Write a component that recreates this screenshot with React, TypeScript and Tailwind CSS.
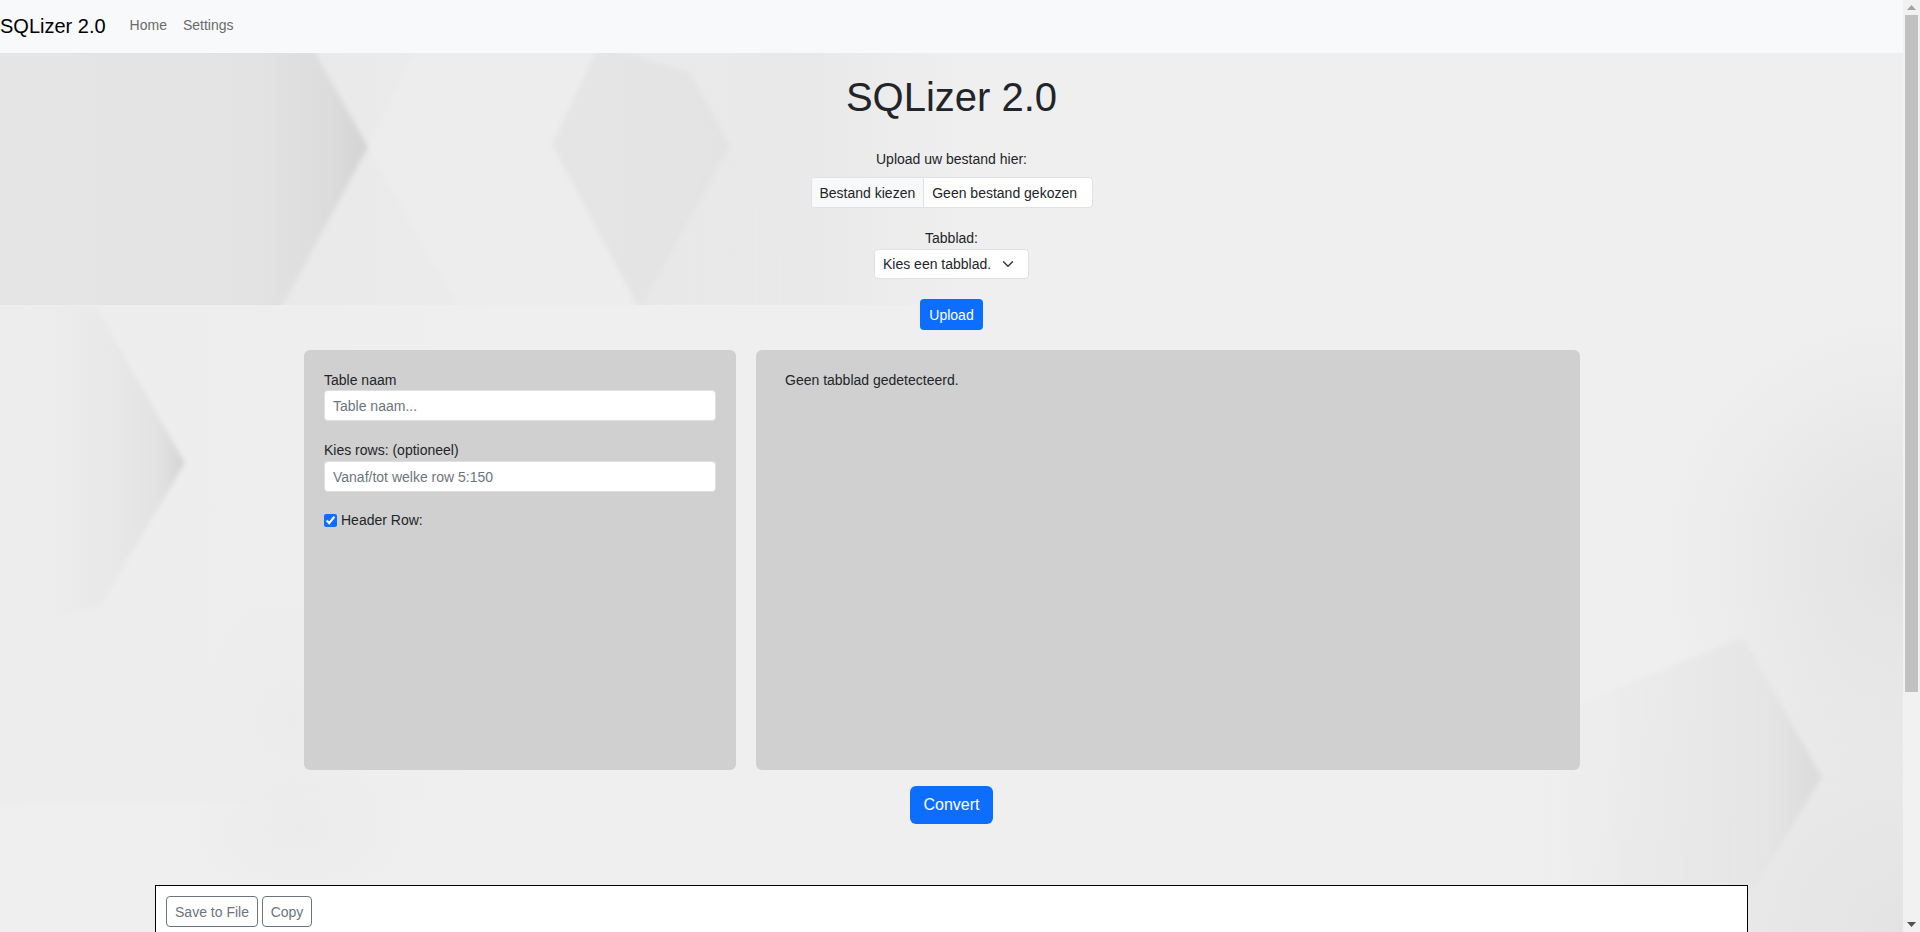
import { ChevronDown } from 'lucide-react'

const FONT = "font-['Liberation_Sans',Arial,sans-serif]"

// achtergrond: grijze zeshoeken, alleen decoratie
function Achtergrond() {
  return (
    <svg className="absolute inset-0 h-full w-full" viewBox="0 0 1903 932" preserveAspectRatio="none" aria-hidden="true">
      <defs>
        <linearGradient id="band" x1="0" x2="1" y1="0" y2="0">
          <stop offset="0" stopColor="#e6e6e6" />
          <stop offset="0.45" stopColor="#ebebeb" />
          <stop offset="0.85" stopColor="#e9e9e9" />
          <stop offset="1" stopColor="#efefef" />
        </linearGradient>
        <linearGradient id="hexA" x1="0" x2="1" y1="0" y2="0">
          <stop offset="0" stopColor="#e5e5e5" />
          <stop offset="0.7" stopColor="#e3e3e3" />
          <stop offset="0.9" stopColor="#dcdcdc" />
          <stop offset="1" stopColor="#d3d3d3" />
        </linearGradient>
        <linearGradient id="hexB" x1="0" x2="1" y1="0" y2="0">
          <stop offset="0" stopColor="#e5e5e5" />
          <stop offset="1" stopColor="#e3e3e3" />
        </linearGradient>
        <linearGradient id="rechts" x1="0" x2="1" y1="0" y2="0">
          <stop offset="0" stopColor="#e8e8e8" />
          <stop offset="1" stopColor="#e8e8e8" stopOpacity="0" />
        </linearGradient>
        <linearGradient id="hexC" x1="0" x2="1" y1="0" y2="0">
          <stop offset="0" stopColor="#e8e8e8" stopOpacity="0" />
          <stop offset="0.5" stopColor="#e8e8e8" />
          <stop offset="0.82" stopColor="#e2e2e2" />
          <stop offset="1" stopColor="#d4d4d4" />
        </linearGradient>
        <linearGradient id="hexD" x1="0" x2="1" y1="0" y2="0">
          <stop offset="0" stopColor="#e8e8e8" stopOpacity="0" />
          <stop offset="0.55" stopColor="#e8e8e8" stopOpacity="0.9" />
          <stop offset="0.8" stopColor="#e5e5e5" />
          <stop offset="1" stopColor="#dbdbdb" />
        </linearGradient>
        <linearGradient id="onderBand" x1="0" x2="1" y1="0" y2="0">
          <stop offset="0" stopColor="#ededed" />
          <stop offset="1" stopColor="#ededed" stopOpacity="0" />
        </linearGradient>
        <radialGradient id="hoekMidden">
          <stop offset="0" stopColor="#e2e2e2" />
          <stop offset="1" stopColor="#e2e2e2" stopOpacity="0" />
        </radialGradient>
        <radialGradient id="hoekOnder">
          <stop offset="0" stopColor="#e3e3e3" />
          <stop offset="1" stopColor="#e3e3e3" stopOpacity="0" />
        </radialGradient>
        <radialGradient id="vlek">
          <stop offset="0" stopColor="#ebebeb" />
          <stop offset="1" stopColor="#ebebeb" stopOpacity="0" />
        </radialGradient>
        <filter id="zacht" x="-10%" y="-10%" width="120%" height="120%">
          <feGaussianBlur stdDeviation="2.5" />
        </filter>
        <clipPath id="bandClip">
          <rect y="53" width="1903" height="252" />
        </clipPath>
      </defs>

      <rect width="1903" height="932" fill="#efefef" />
      <rect y="305" width="500" height="500" fill="url(#onderBand)" />
      <circle cx="1903" cy="560" r="240" fill="url(#hoekMidden)" />
      <circle cx="1903" cy="932" r="340" fill="url(#hoekOnder)" />
      <ellipse cx="290" cy="720" rx="90" ry="130" fill="url(#vlek)" />
      <ellipse cx="300" cy="830" rx="110" ry="70" fill="url(#vlek)" />

      <rect y="53" width="960" height="252" fill="url(#band)" />
      <g clipPath="url(#bandClip)">
        <g filter="url(#zacht)">
          <polygon points="-10,40 308,40 368,147 280,310 -10,310" fill="url(#hexA)" />
          <polygon points="420,40 600,40 552,145 640,310 460,310 368,147" fill="#ededed" />
          <polygon points="600,45 690,73 730,145 640,310 552,145" fill="url(#hexB)" />
          <polygon points="730,145 820,310 640,310" fill="url(#rechts)" />
        </g>
      </g>

      <g filter="url(#zacht)">
        <polygon points="40,305 95,305 185,463 100,606 40,620" fill="url(#hexC)" />
        <polygon points="1540,720 1743,637 1822,777 1750,895 1540,900" fill="url(#hexD)" />
      </g>
    </svg>
  )
}

function Scrollbalk() {
  return (
    <div className="relative flex w-[17px] shrink-0 flex-col items-center bg-[#f1f1f1]">
      <div className="flex h-[15px] items-center justify-center">
        <svg width="9" height="5" viewBox="0 0 9 5"><polygon points="4.5,0 9,5 0,5" fill="#a3a3a3" /></svg>
      </div>
      <div className="h-[677px] w-[13px] bg-[#c1c1c1]" />
      <div className="mt-auto flex h-[15px] items-center justify-center">
        <svg width="9" height="5" viewBox="0 0 9 5"><polygon points="0,0 9,0 4.5,5" fill="#505050" /></svg>
      </div>
    </div>
  )
}

export default function App() {
  const veld = 'h-[31px] w-full rounded-[4px] border border-[#dee2e6] bg-white px-2 text-sm text-[#212529] placeholder:text-[#6c757d] outline-none'

  return (
    <div className={`${FONT} flex h-[932px] overflow-hidden text-sm text-[#212529]`}>
      <div className="relative min-w-0 flex-1">
        <Achtergrond />

        <div className="relative">
          <nav className="flex h-[53px] items-center bg-[#f8f9fa]">
            <a className="text-[20px] text-black">SQLizer 2.0</a>
            <a className="mb-[3px] ml-6 text-[#6b6b6b]">Home</a>
            <a className="mb-[3px] ml-4 text-[#6b6b6b]">Settings</a>
          </nav>

          <main className="flex flex-col items-center">
            <h1 className="mt-[20px] text-[40px] leading-[48px]">SQLizer 2.0</h1>

            <label className="mt-[28px] leading-[21px]">Upload uw bestand hier:</label>
            <div className="mt-[7px] flex h-[31px] w-[282px] overflow-hidden rounded-[4px] border border-[#dee2e6] bg-white">
              <span className="flex items-center border-r border-[#dee2e6] bg-[#f8f9fa] px-2">Bestand kiezen</span>
              <span className="flex items-center px-2">Geen bestand gekozen</span>
            </div>

            <label className="mt-[20px] leading-[21px]">Tabblad:</label>
            <div className="relative">
              <select className="h-[30px] w-[155px] appearance-none rounded-[4px] border border-[#dee2e6] bg-white pl-2 text-sm outline-none">
                <option>Kies een tabblad.</option>
              </select>
              <ChevronDown className="pointer-events-none absolute right-[12px] top-[6px] h-[18px] w-[18px] text-[#343a40]" strokeWidth={2} />
            </div>

            <button className="mt-[20px] h-[31px] w-[63px] rounded-[4px] bg-[#0d6efd] text-sm text-white">Upload</button>

            <section className="mt-[20px] flex h-[420px] w-full gap-5 pl-[304px]">
              <div className="w-[432px] rounded-[6px] bg-[#d0d0d0] px-5 pt-[20px]">
                <label className="block leading-[20px]">Table naam</label>
                <input className={veld} placeholder="Table naam..." />

                <label className="mt-[19px] block leading-[21px]">Kies rows: (optioneel)</label>
                <input className={veld} placeholder="Vanaf/tot welke row 5:150" />

                <label className="mt-[18px] flex items-center gap-1 leading-[21px]">
                  <input type="checkbox" defaultChecked className="m-0 h-[13px] w-[13px] accent-[#0d6efd]" />
                  Header Row:
                </label>
              </div>

              <div className="w-[824px] rounded-[6px] bg-[#d0d0d0] pl-[29px] pt-[20px]">
                <p className="leading-[20px]">Geen tabblad gedetecteerd.</p>
              </div>
            </section>

            <button className="mt-[16px] h-[38px] w-[83px] rounded-[6px] bg-[#0d6efd] text-base text-white">Convert</button>

            <div className="mt-[61px] flex h-[200px] w-[1593px] items-start gap-[4px] border border-black bg-white pl-[10px] pt-[10px]">
              <button className="h-[31px] w-[92px] rounded-[4px] border border-[#6c757d] text-sm text-[#6c757d]">Save to File</button>
              <button className="h-[31px] w-[50px] rounded-[4px] border border-[#6c757d] text-sm text-[#6c757d]">Copy</button>
            </div>
          </main>
        </div>
      </div>

      <Scrollbalk />
    </div>
  )
}
